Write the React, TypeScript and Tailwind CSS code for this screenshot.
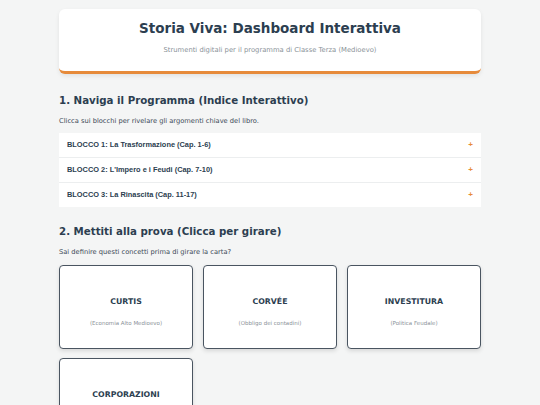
import React from "react";

const blocks = [
  "BLOCCO 1: La Trasformazione (Cap. 1-6)",
  "BLOCCO 2: L'Impero e i Feudi (Cap. 7-10)",
  "BLOCCO 3: La Rinascita (Cap. 11-17)",
];

const cards = [
  { t: "CURTIS", s: "(Economia Alto Medioevo)" },
  { t: "CORVÉE", s: "(Obbligo dei contadini)" },
  { t: "INVESTITURA", s: "(Politica Feudale)" },
  { t: "CORPORAZIONI", s: "(Economia Basso Medioevo)" },
];

export default function App() {
  return (
    <div className="min-h-screen bg-[#f4f5f5] font-['DejaVu_Sans',sans-serif] text-[#2c3e50]">
      <div className="mx-auto w-[422px] pt-[9px] pb-8">
        <div className="rounded-[6px] border-b-[3px] border-[#e68a3a] bg-white px-4 pt-[10px] pb-[16px] text-center shadow-[0_2px_4px_rgba(0,0,0,0.08)]">
          <h1 className="text-[13.5px] font-bold leading-[18px] text-[#2c3e50]">
            Storia Viva: Dashboard Interattiva
          </h1>
          <p className="mt-[8px] text-[6.8px] leading-[10px] text-[#8a9298]">
            Strumenti digitali per il programma di Classe Terza (Medioevo)
          </p>
        </div>

        <h2 className="mt-[19px] text-[10.25px] font-bold leading-[14px] text-[#2c3e50]">
          1. Naviga il Programma (Indice Interattivo)
        </h2>
        <p className="mt-[9px] text-[6.7px] leading-[10px] text-[#3d4a57]">
          Clicca sui blocchi per rivelare gli argomenti chiave del libro.
        </p>
        <div className="mt-[7px] flex flex-col gap-px bg-[#eceeef]">
          {blocks.map((b) => (
            <div
              key={b}
              className="flex h-[24px] items-center justify-between bg-white px-2"
            >
              <span className="font-['Liberation_Sans',sans-serif] text-[7.4px] font-bold text-[#2c3e50]">
                {b}
              </span>
              <span className="font-['Liberation_Sans',sans-serif] text-[8px] font-bold text-[#e68a3a]">
                +
              </span>
            </div>
          ))}
        </div>

        <h2 className="mt-[17px] text-[10.25px] font-bold leading-[14px] text-[#2c3e50]">
          2. Mettiti alla prova (Clicca per girare)
        </h2>
        <p className="mt-[9px] text-[6.7px] leading-[10px] text-[#3d4a57]">
          Sai definire questi concetti prima di girare la carta?
        </p>
        <div className="mt-[8px] grid grid-cols-3 gap-x-[10px] gap-y-[9px]">
          {cards.map((c) => (
            <div
              key={c.t}
              className="flex h-[84px] flex-col items-center rounded-[4px] border-[1.5px] border-[#4a5561] bg-white pt-[29.5px] shadow-[0_2px_4px_rgba(0,0,0,0.12)]"
            >
              <div className="text-[7.8px] font-bold leading-[12px] text-[#2c3e50]">
                {c.t}
              </div>
              <div className="mt-[11px] text-[5.5px] leading-[8px] text-[#8a9298]">
                {c.s}
              </div>
            </div>
          ))}
        </div>
      </div>
    </div>
  );
}
